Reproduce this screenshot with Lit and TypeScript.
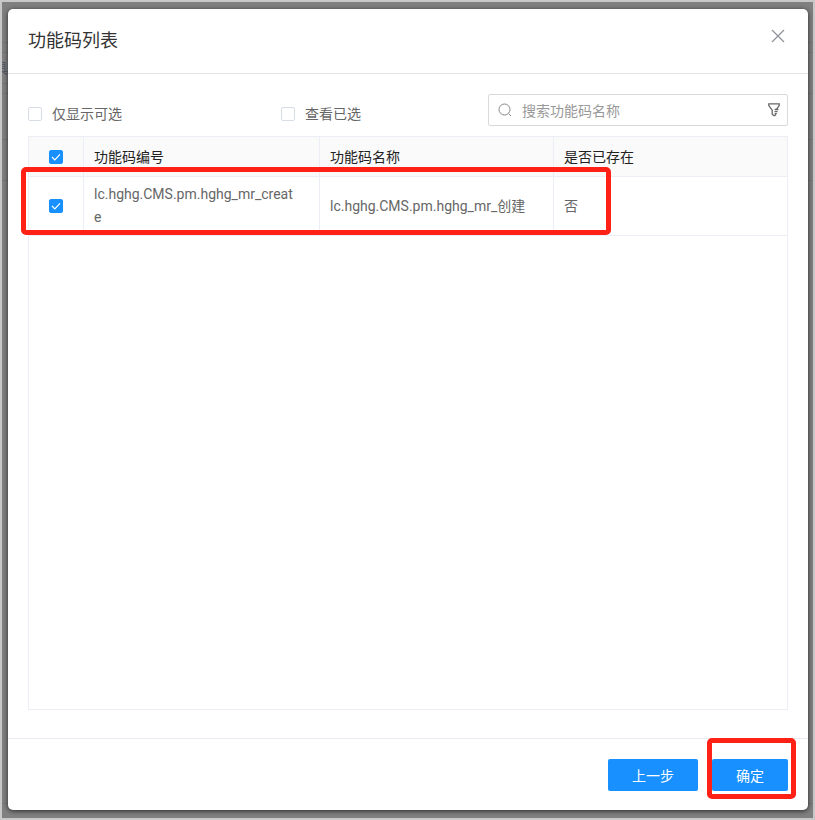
import { LitElement, html, css, svg } from "lit";
import { customElement, property, state } from "lit/decorators.js";

interface FunctionCode {
  code: string;
  name: string;
  exists: boolean;
}

const ROWS: FunctionCode[] = [
  { code: "lc.hghg.CMS.pm.hghg_mr_create", name: "lc.hghg.CMS.pm.hghg_mr_创建", exists: false },
];

@customElement("check-box")
class CheckBox extends LitElement {
  @property({ type: Boolean }) checked = false;
  @property() label = "";
  @property() hint = "";

  static styles = css`
    :host {
      display: flex;
    }
    label {
      display: flex;
      align-items: center;
      gap: 10px;
      white-space: nowrap;
    }
    .mark {
      display: grid;
      width: 14px;
      height: 14px;
    }
    input,
    svg {
      grid-area: 1 / 1;
    }
    input {
      appearance: none;
      box-sizing: border-box;
      width: 14px;
      height: 14px;
      margin: 0;
      border: 1px solid #d8dce6;
      border-radius: 2px;
      background: #fff;
    }
    input:checked {
      border-color: #1890ff;
      background: #1890ff;
    }
    svg {
      z-index: 1;
      pointer-events: none;
      visibility: hidden;
    }
    input:checked + svg {
      visibility: visible;
    }
  `;

  render() {
    return html`<label>
      <span class="mark">
        <input
          type="checkbox"
          aria-label=${this.label || this.hint}
          .checked=${this.checked}
          @change=${(e: Event) => (this.checked = (e.target as HTMLInputElement).checked)}
        />
        <svg width="14" height="14" viewBox="0 0 14 14" fill="none" stroke="#fff" stroke-width="1.2">
          <path d="M3 7 5.8 9.8 11 4.4" />
        </svg>
      </span>
      ${this.label}
    </label>`;
  }
}

@customElement("app-root")
class AppRoot extends LitElement {
  @state() private query = "";

  static styles = css`
    :host {
      display: grid;
      box-sizing: border-box;
      min-height: 100vh;
      border: 2px solid #c8c8c8;
      background: #808080;
      color: #666;
      font: 14px/22px Roboto, "Noto Sans CJK SC", sans-serif;
    }
    .backdrop,
    .dialog {
      grid-area: 1 / 1;
    }
    .backdrop {
      display: flex;
      flex-direction: column;
    }
    .band {
      box-sizing: border-box;
      border-bottom: 1px solid #777;
    }
    .tall {
      height: 41px;
    }
    .short {
      height: 10px;
    }
    .named {
      display: flex;
      align-items: center;
      justify-content: flex-end;
      width: 6px;
      height: 31px;
      overflow: hidden;
      color: #555b66;
    }
    .wide {
      height: 46px;
    }
    .rest {
      flex: 1;
      margin-bottom: 14px;
    }
    .dialog {
      z-index: 1;
      display: flex;
      flex-direction: column;
      margin: 7px 5px 8px 6px;
      border-radius: 5px;
      background: #fff;
      box-shadow: 0 1px 5px rgba(0, 0, 0, 0.7);
    }
    header {
      display: flex;
      align-items: center;
      justify-content: space-between;
      height: 64px;
      padding: 0 20px;
      border-bottom: 1px solid #e4e4e6;
    }
    h1 {
      margin: 0;
      color: #333;
      font-size: 18px;
      font-weight: 400;
      line-height: 24px;
    }
    button {
      font: inherit;
      border: 0;
      padding: 0;
    }
    .close {
      display: flex;
      padding: 3px;
      margin-bottom: 10px;
      background: none;
      color: #909399;
    }
    main {
      display: flex;
      flex: 1;
      flex-direction: column;
      gap: 10px;
      padding: 20px 20px 28px;
    }
    .tools {
      display: grid;
      grid-template-columns: 33.3% 1fr 300px;
      height: 32px;
    }
    .tools check-box {
      padding-top: 8px;
    }
    .search {
      display: flex;
      align-items: center;
      gap: 10px;
      box-sizing: border-box;
      padding: 0 5px 0 9px;
      border: 1px solid #d9d9d9;
      border-radius: 2px;
      color: #888;
    }
    .search input {
      flex: 1;
      min-width: 0;
      padding: 2px 0 0;
      border: 0;
      outline: 0;
      background: none;
      color: #666;
      font: inherit;
    }
    .search input::placeholder {
      color: #999;
    }
    .filter {
      display: flex;
      background: none;
      color: #666;
    }
    .grid {
      position: relative;
      flex: 1;
      border: 1px solid #ebeef5;
    }
    table {
      width: 100%;
      border-collapse: separate;
      border-spacing: 0;
      table-layout: fixed;
    }
    .pick {
      width: 55px;
    }
    .code {
      width: 236px;
    }
    .name {
      width: 234px;
    }
    th,
    td {
      box-sizing: border-box;
      padding: 0 24px 0 10px;
      border-right: 1px solid #ebeef5;
      border-bottom: 1px solid #ebeef5;
      text-align: left;
      vertical-align: middle;
      overflow-wrap: anywhere;
    }
    th:last-child,
    td:last-child {
      border-right: 0;
    }
    th {
      height: 40px;
      background: #fafafa;
      color: #222;
      font-weight: 400;
    }
    td {
      height: 59px;
      line-height: 23px;
    }
    .tick {
      padding: 0;
    }
    .tick check-box {
      justify-content: center;
    }
    .ring {
      position: absolute;
      box-sizing: border-box;
      border: 5px solid #ff2116;
      border-radius: 5px;
      pointer-events: none;
    }
    .row-ring {
      top: 30px;
      left: -8px;
      width: 590px;
      height: 68px;
    }
    .ok-ring {
      inset: -21px -8px -8px -5px;
    }
    footer {
      display: flex;
      justify-content: flex-end;
      gap: 14px;
      padding: 20px 20px 19px;
      border-top: 1px solid #e8ebf2;
    }
    .action {
      position: relative;
      height: 32px;
      padding: 2px 24px 0;
      border-radius: 2px;
      background: #1890ff;
      color: #fff;
    }
  `;

  private searchIcon = svg`<svg width="14" height="14" viewBox="0 0 14 14" fill="none" stroke="currentColor">
    <circle cx="6.5" cy="6.5" r="5.5" /><path d="M10.5 10.5 13 13" />
  </svg>`;

  private filterIcon = svg`<svg width="16" height="16" viewBox="0 0 16 16" fill="none" stroke="currentColor" stroke-width="1.3">
    <path d="M8 13.8 6.2 12.2V8.2L2.8 3.6V1.8H13.2V3.6L10.4 7.4M8 14 10 12.6M8.6 7.5H12.4M8.6 9.6H11.6M8.6 11.7H10.8" />
  </svg>`;

  render() {
    return html`
      <div class="backdrop" aria-hidden="true">
        <div class="band tall"></div>
        <div class="band short"></div>
        <div class="band named">具</div>
        <div class="band short"></div>
        <div class="band wide"></div>
        <div class="band tall"></div>
        <div class="band rest"></div>
      </div>
      <section class="dialog" role="dialog" aria-labelledby="title">
        <header>
          <h1 id="title">功能码列表</h1>
          <button class="close" aria-label="关闭">
            <svg width="14" height="14" viewBox="0 0 14 14" fill="none" stroke="currentColor" stroke-width="1.3">
              <path d="M1 1 13 13M13 1 1 13" />
            </svg>
          </button>
        </header>
        <main>
          <div class="tools">
            <check-box label="仅显示可选"></check-box>
            <check-box label="查看已选"></check-box>
            <div class="search">
              ${this.searchIcon}
              <input
                type="text"
                aria-label="搜索功能码名称"
                placeholder="搜索功能码名称"
                .value=${this.query}
                @input=${(e: Event) => (this.query = (e.target as HTMLInputElement).value)}
              />
              <button class="filter" aria-label="筛选">${this.filterIcon}</button>
            </div>
          </div>
          <div class="grid">
            <table>
              <colgroup>
                <col class="pick" />
                <col class="code" />
                <col class="name" />
                <col />
              </colgroup>
              <thead>
                <tr>
                  <th class="tick"><check-box checked hint="全选"></check-box></th>
                  <th>功能码编号</th>
                  <th>功能码名称</th>
                  <th>是否已存在</th>
                </tr>
              </thead>
              <tbody>
                ${ROWS.filter((r) => r.name.includes(this.query)).map(
                  (r) => html`<tr>
                    <td class="tick"><check-box checked hint=${r.name}></check-box></td>
                    <td>${r.code}</td>
                    <td>${r.name}</td>
                    <td>${r.exists ? "是" : "否"}</td>
                  </tr>`,
                )}
              </tbody>
            </table>
            <div class="ring row-ring"></div>
          </div>
        </main>
        <footer>
          <button class="action">上一步</button>
          <button class="action">确定<span class="ring ok-ring"></span></button>
        </footer>
      </section>
    `;
  }
}
